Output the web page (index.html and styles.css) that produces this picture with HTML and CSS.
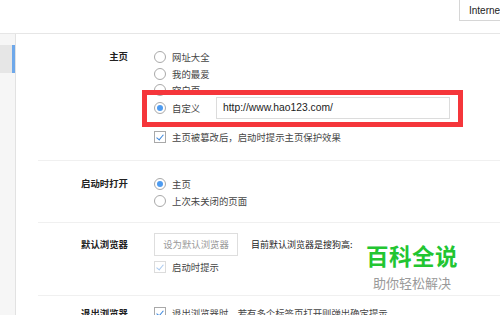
FILE: index.html
```html
<!DOCTYPE html>
<html lang="zh-CN">
<head>
  <meta charset="UTF-8" />
  <title>设置</title>
  <link rel="stylesheet" href="styles.css">
</head>
<body>

  <div class="top-bar">
    <div class="search-box">Interne</div>
  </div>

  <div class="layout">
    <div class="sidebar">
      <div class="nav-item active"></div>
    </div>

    <div class="settings">

      <div class="section section-home">
        <div class="label">主页</div>
        <div class="options">
          <div class="opt"><span class="radio"></span>网址大全</div>
          <div class="opt"><span class="radio"></span>我的最爱</div>
          <div class="opt opt-short"><span class="radio"></span>空白页</div>
          <div class="opt custom">
            <span class="radio checked"></span>
            <span class="custom-text">自定义</span>
            <div class="url-input">http://www.hao123.com/</div>
            <div class="highlight"></div>
          </div>
          <div class="check-row"><span class="checkbox"></span>主页被篡改后，启动时提示主页保护效果</div>
        </div>
      </div>

      <div class="section section-start">
        <div class="label">启动时打开</div>
        <div class="options">
          <div class="opt"><span class="radio checked"></span>主页</div>
          <div class="opt"><span class="radio"></span>上次未关闭的页面</div>
        </div>
      </div>

      <div class="section section-default">
        <div class="label label-tall">默认浏览器</div>
        <div class="options">
          <div class="default-row">
            <div class="btn">设为默认浏览器</div>
            <span class="current">目前默认浏览器是搜狗高:</span>
          </div>
          <div class="check-row"><span class="checkbox disabled"></span>启动时提示</div>
        </div>
      </div>

      <div class="section section-exit">
        <div class="label">退出浏览器</div>
        <div class="options">
          <div class="check-row"><span class="checkbox"></span>退出浏览器时，若有多个标签页打开则弹出确定提示</div>
        </div>
      </div>

    </div>
  </div>

  <!-- watermark -->
  <div class="watermark">
    <div class="wm-title">百科全说</div>
    <div class="wm-sub">助你轻松解决</div>
  </div>

</body>
</html>
```

FILE: styles.css
```css
* {
  box-sizing: border-box;
}

body {
  margin: 0;
  height: 315px;
  overflow: hidden;
  background: #fff;
  font-family: "Noto Sans CJK SC", sans-serif;
  font-size: 9.4px;
  color: #444;
}

.top-bar {
  height: 34px;
  border-bottom: 1px solid #e6e6e6;
  display: flex;
  justify-content: flex-end;
  align-items: flex-start;
}

.search-box {
  width: 41px;
  height: 22px;
  margin-top: -1px;
  border: 1px solid #d6d6d6;
  border-right: none;
  padding-left: 9px;
  font-family: "Liberation Sans", sans-serif;
  font-size: 10px;
  line-height: 21px;
  color: #222;
  white-space: nowrap;
  overflow: hidden;
}

.layout {
  display: flex;
  height: 281px;
}

.sidebar {
  width: 16px;
  background: #f6f6f6;
  border-right: 1px solid #e2e2e2;
  padding-top: 11px;
}

.nav-item {
  height: 28px;
}

.nav-item.active {
  background: #e6e6e6;
  border-right: 3px solid #6ea8ea;
}

.settings {
  flex: 1;
  padding-left: 22px;
}

.section {
  display: grid;
  grid-template-columns: 90px 1fr;
  column-gap: 26px;
  border-bottom: 1px solid #f0f0f0;
}

.section-home {
  padding: 14px 0 16px;
}

.section-start {
  padding: 14px 0 13px;
}

.section-default {
  padding: 10px 0 21px;
}

.section-exit {
  padding: 10px 0 0;
  border-bottom: none;
}

.label {
  text-align: right;
  font-weight: bold;
  color: #222;
  line-height: 17px;
}

.label-tall {
  line-height: 23px;
}

.section-exit .label {
  line-height: 14px;
}

.opt {
  display: flex;
  align-items: center;
  height: 17px;
  white-space: nowrap;
}

.opt-short {
  height: 15px;
}

.radio {
  width: 12px;
  height: 12px;
  border: 1px solid #a9a9a9;
  border-radius: 50%;
  background: #fff;
  margin-right: 6px;
  display: flex;
  align-items: center;
  justify-content: center;
  flex-shrink: 0;
}

.radio.checked::after {
  content: "";
  width: 6px;
  height: 6px;
  border-radius: 50%;
  background: #4d9bf0;
}

.custom {
  height: 22px;
  position: relative;
}

.custom-text {
  width: 44px;
}

.url-input {
  width: 234px;
  height: 22px;
  border: 1px solid #dcdcdc;
  padding-left: 6px;
  font-family: "Liberation Sans", sans-serif;
  font-size: 10.3px;
  line-height: 20px;
  color: #222;
}

.highlight {
  position: absolute;
  left: -12px;
  top: -7px;
  width: 321px;
  height: 37px;
  border: 5px solid #f5363b;
}

.check-row {
  display: flex;
  align-items: center;
  height: 14px;
  margin-top: 11px;
  white-space: nowrap;
}

.section-default .check-row {
  margin-top: 4px;
}

.section-exit .check-row {
  margin-top: 0;
}

.checkbox {
  width: 12px;
  height: 12px;
  border: 1px solid #a9a9a9;
  background: #fff;
  margin-right: 6px;
  position: relative;
  flex-shrink: 0;
}

.checkbox::after {
  content: "";
  position: absolute;
  left: 3px;
  top: 1px;
  width: 3px;
  height: 6px;
  border-right: 1.5px solid #3a86dc;
  border-bottom: 1.5px solid #3a86dc;
  transform: rotate(40deg);
}

.checkbox.disabled {
  border-color: #dcdcdc;
}

.checkbox.disabled::after {
  border-color: #a9c9ef;
}

.default-row {
  display: flex;
  align-items: center;
  height: 23px;
  white-space: nowrap;
}

.btn {
  width: 84px;
  height: 23px;
  border: 1px solid #dedede;
  text-align: center;
  line-height: 21px;
  color: #999;
}

.current {
  margin-left: 13px;
  color: #222;
  font-size: 9px;
}

.watermark {
  position: absolute;
  left: 366px;
  top: 241px;
  text-align: center;
}

.wm-title {
  font-size: 22.5px;
  font-weight: bold;
  color: #22c531;
  line-height: 28px;
  letter-spacing: 0.5px;
}

.wm-sub {
  font-size: 13px;
  color: #9a9a9a;
  line-height: 16px;
  margin-top: 6px;
}
```
